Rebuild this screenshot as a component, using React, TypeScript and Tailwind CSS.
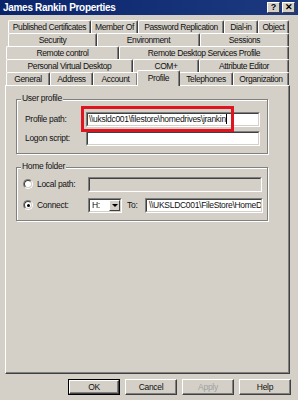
import React from "react";

const font = { fontFamily: '"Liberation Sans", Arial, sans-serif' };

type Tab = { label: string; w: number };

const rows: { pl: number; tabs: Tab[] }[] = [
  {
    pl: 8,
    tabs: [
      { label: "Published Certificates", w: 83 },
      { label: "Member Of", w: 47 },
      { label: "Password Replication", w: 86 },
      { label: "Dial-in", w: 34 },
      { label: "Object", w: 31 },
    ],
  },
  {
    pl: 8,
    tabs: [
      { label: "Security", w: 89 },
      { label: "Environment", w: 103 },
      { label: "Sessions", w: 89 },
    ],
  },
  {
    pl: 6,
    tabs: [
      { label: "Remote control", w: 113 },
      { label: "Remote Desktop Services Profile", w: 170 },
    ],
  },
  {
    pl: 6,
    tabs: [
      { label: "Personal Virtual Desktop", w: 127 },
      { label: "COM+", w: 66 },
      { label: "Attribute Editor", w: 90 },
    ],
  },
];

const lastRow: Tab[] = [
  { label: "General", w: 44 },
  { label: "Address", w: 43 },
  { label: "Account", w: 45 },
  { label: "Profile", w: 41 },
  { label: "Telephones", w: 54 },
  { label: "Organization", w: 56 },
];

function TabCell({ t }: { t: Tab }) {
  return (
    <div
      className="h-[13px] shrink-0 flex items-center justify-center border-t border-l border-t-white border-l-white border-r border-r-[#404040] shadow-[inset_-1px_0_0_#808080] rounded-tl-[2px] rounded-tr-[2px] text-[8.5px] leading-none text-[#111] tracking-[-0.4px] overflow-hidden whitespace-nowrap"
      style={{ width: t.w }}
    >
      {t.label}
    </div>
  );
}

function Sunken({ className = "", children }: { className?: string; children?: React.ReactNode }) {
  return (
    <div
      className={
        "border border-t-[#808080] border-l-[#808080] border-b-white border-r-white " + className
      }
    >
      <div className="w-full h-full border border-t-[#404040] border-l-[#404040] border-b-[#d4d0c8] border-r-[#d4d0c8] flex items-center overflow-hidden">
        {children}
      </div>
    </div>
  );
}

function Btn({ label, def, disabled }: { label: string; def?: boolean; disabled?: boolean }) {
  return (
    <div
      className={
        "w-[52px] h-[16px] flex items-center justify-center text-[8.5px] tracking-[-0.3px] border " +
        (def
          ? "border-[#000] "
          : "border-t-white border-l-white border-b-[#404040] border-r-[#404040] ") +
        (disabled ? "text-[#a0a0a0]" : "text-[#111]")
      }
    >
      <div
        className={
          "w-full h-full flex items-center justify-center " +
          (def
            ? "border border-t-white border-l-white border-b-[#404040] border-r-[#404040] shadow-[inset_-1px_-1px_0_#808080]"
            : "shadow-[inset_-1px_-1px_0_#808080]")
        }
      >
        {label}
      </div>
    </div>
  );
}

function Radio({ checked }: { checked?: boolean }) {
  return (
    <div className="w-[10px] h-[10px] rounded-full border border-t-[#808080] border-l-[#808080] border-b-white border-r-white flex items-center justify-center shrink-0">
      <div className="w-[8px] h-[8px] rounded-full border border-t-[#404040] border-l-[#404040] border-b-[#d4d0c8] border-r-[#d4d0c8] bg-white flex items-center justify-center">
        {checked && <div className="w-[3px] h-[3px] rounded-full bg-black" />}
      </div>
    </div>
  );
}

function GroupBox({
  title,
  h,
  mt,
  children,
}: {
  title: string;
  h: number;
  mt: number;
  children?: React.ReactNode;
}) {
  return (
    <div className="ml-[10px] w-[252px] relative" style={{ marginTop: mt, height: h }}>
      <div className="w-full h-full border border-[#808080] shadow-[1px_1px_0_#fff,inset_1px_1px_0_#fff]">
        {children}
      </div>
      <div className="absolute left-[5px] -top-[6px] px-[1px] bg-[#d4d0c8] text-[8.5px] leading-[11px] text-[#111] tracking-[-0.3px]">
        {title}
      </div>
    </div>
  );
}

const lbl = "text-[8.5px] tracking-[-0.3px] text-[#111] whitespace-nowrap";

export default function App() {
  return (
    <div className="w-[298px] h-[400px] bg-[#d4d0c8] flex flex-col overflow-hidden" style={font}>
      {/* title bar */}
      <div className="h-[15px] bg-gradient-to-r from-[#0a246a] to-[#1d3a80] flex items-center justify-between pl-[3px] pr-[3px]">
        <span className="text-white font-bold text-[10px] leading-none tracking-[-0.3px]">
          James Rankin Properties
        </span>
        <div className="flex gap-[2px]">
          <div className="w-[13px] h-[11px] bg-[#d4d0c8] border border-t-white border-l-white border-b-[#404040] border-r-[#404040] flex items-center justify-center text-[9px] font-bold leading-none text-black">
            ?
          </div>
          <div className="w-[13px] h-[11px] bg-[#d4d0c8] border border-t-white border-l-white border-b-[#404040] border-r-[#404040] flex items-center justify-center text-[9px] font-bold leading-none text-black">
            ✕
          </div>
        </div>
      </div>

      {/* tabs */}
      <div className="mt-[5px] flex flex-col">
        {rows.map((r, i) => (
          <div key={i} className="flex" style={{ paddingLeft: r.pl }}>
            {r.tabs.map((t) => (
              <TabCell key={t.label} t={t} />
            ))}
          </div>
        ))}
        <div className="flex items-end h-[13px] pl-[6px]">
          {lastRow.map((t) =>
            t.label === "Profile" ? (
              <div
                key={t.label}
                className="relative z-10 h-[16px] -mt-[3px] -mb-[1px] -ml-[1px] -mr-[1px] shrink-0 bg-[#d4d0c8] flex items-start pt-[3px] justify-center border-t border-l border-t-white border-l-white border-r border-r-[#404040] shadow-[inset_-1px_0_0_#808080] rounded-tl-[2px] rounded-tr-[2px] text-[8.5px] leading-none text-[#111] tracking-[-0.4px]"
                style={{ width: t.w + 2 }}
              >
                Profile
              </div>
            ) : (
              <TabCell key={t.label} t={t} />
            )
          )}
        </div>
      </div>

      {/* panel */}
      <div className="ml-[5px] w-[285px] h-[289px] border border-t-white border-l-white border-b-[#404040] border-r-[#404040] shadow-[inset_-1px_-1px_0_#808080] flex flex-col">
        <GroupBox title="User profile" h={55} mt={13}>
          <div className="flex flex-col pt-[8px]">
            <div className="flex items-center h-[22px]">
              <span className={"ml-[8px] w-[61px] " + lbl}>Profile path:</span>
              <div className="relative">
                <Sunken className="w-[174px] h-[15px] bg-white">
                  <span className={"ml-[1px] " + lbl}>\\uksldc001\filestore\homedrives\jrankin</span>
                  <span className="w-[1px] h-[10px] bg-black shrink-0" />
                </Sunken>
                <div className="absolute left-[-5px] top-[-6px] w-[153px] h-[26px] border-[3px] border-[#e0141e]" />
              </div>
            </div>
            <div className="flex items-center h-[16px]">
              <span className={"ml-[8px] w-[61px] " + lbl}>Logon script:</span>
              <Sunken className="w-[174px] h-[15px] bg-white" />
            </div>
          </div>
        </GroupBox>

        <GroupBox title="Home folder" h={54} mt={13}>
          <div className="flex flex-col pt-[8px]">
            <div className="flex items-center h-[16px]">
              <div className="ml-[6px]">
                <Radio />
              </div>
              <span className={"ml-[4px] w-[51px] " + lbl}>Local path:</span>
              <Sunken className="w-[174px] h-[15px] bg-[#d4d0c8]" />
            </div>
            <div className="flex items-center h-[16px] mt-[5px]">
              <div className="ml-[6px]">
                <Radio checked />
              </div>
              <span className={"ml-[4px] w-[51px] " + lbl}>Connect:</span>
              <Sunken className="w-[34px] h-[15px] bg-white">
                <span className={"ml-[2px] flex-1 " + lbl}>H:</span>
                <div className="w-[11px] h-full bg-[#d4d0c8] border border-t-white border-l-white border-b-[#404040] border-r-[#404040] flex items-center justify-center">
                  <div className="w-0 h-0 border-l-[3px] border-r-[3px] border-t-[3px] border-l-transparent border-r-transparent border-t-black" />
                </div>
              </Sunken>
              <span className={"ml-[5px] w-[18px] " + lbl}>To:</span>
              <Sunken className="w-[118px] h-[15px] bg-white">
                <span className={"ml-[2px] " + lbl}>\\UKSLDC001\FileStore\HomeD</span>
              </Sunken>
            </div>
          </div>
        </GroupBox>
      </div>

      {/* buttons */}
      <div className="mt-[5px] flex gap-[5px] pl-[68px]">
        <Btn label="OK" def />
        <Btn label="Cancel" />
        <Btn label="Apply" disabled />
        <Btn label="Help" />
      </div>
    </div>
  );
}
